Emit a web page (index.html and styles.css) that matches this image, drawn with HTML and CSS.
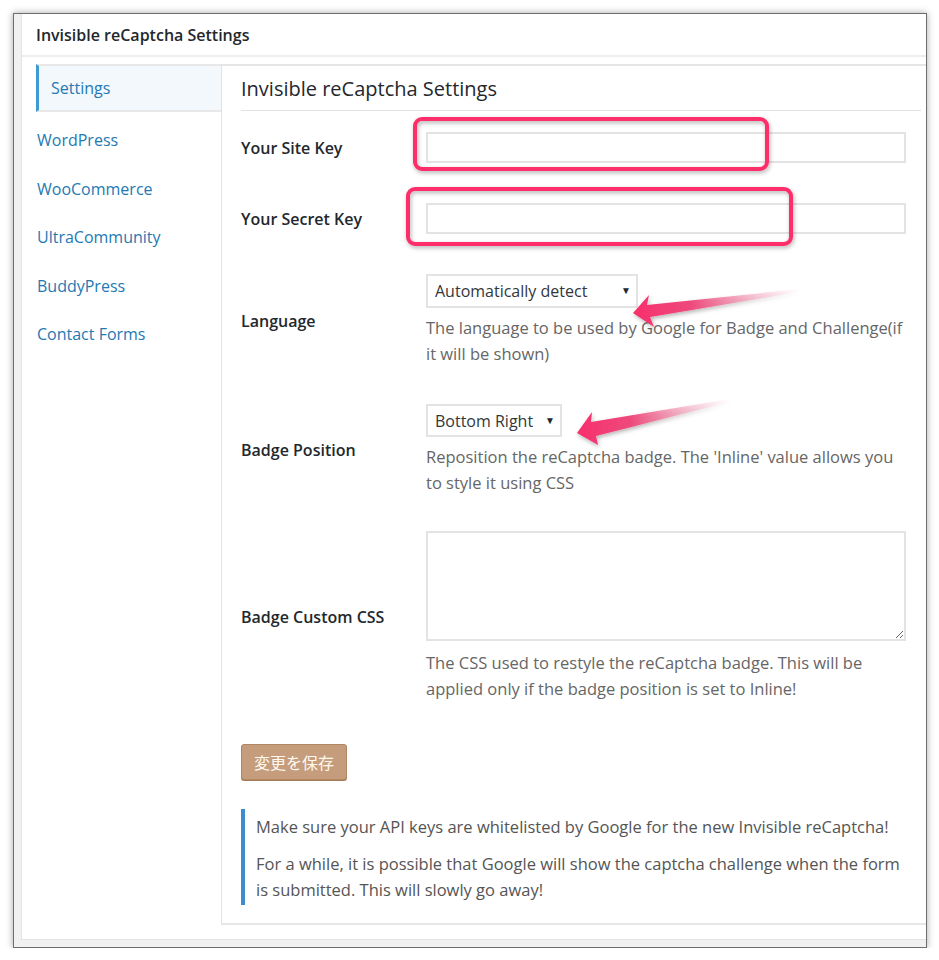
FILE: index.html
```html
<!DOCTYPE html>
<html lang="en">
<head>
    <meta charset="UTF-8">
    <meta name="viewport" content="width=device-width, initial-scale=1.0">
    <title>Invisible reCaptcha Settings</title>
    <link rel="stylesheet" href="styles.css">
</head>
<body>
    <div class="window">
        <div class="panel">
            <div class="heading">
                <h1>Invisible reCaptcha Settings</h1>
            </div>
            <div class="layout">
                <ul class="side-nav">
                    <li class="active"><a href="#">Settings</a></li>
                    <li><a href="#">WordPress</a></li>
                    <li><a href="#">WooCommerce</a></li>
                    <li><a href="#">UltraCommunity</a></li>
                    <li><a href="#">BuddyPress</a></li>
                    <li><a href="#">Contact Forms</a></li>
                </ul>

                <div class="main">
                    <h2>Invisible reCaptcha Settings</h2>
                    <form class="form-table">
                        <div class="row row-first">
                            <label>Your Site Key</label>
                            <div class="field"><input type="text" class="regular-text"></div>
                        </div>
                        <div class="row">
                            <label>Your Secret Key</label>
                            <div class="field"><input type="text" class="regular-text"></div>
                        </div>
                        <div class="row has-desc">
                            <label>Language</label>
                            <div class="field">
                                <span class="select-wrap lang">
                                    <select><option>Automatically detect</option></select>
                                </span>
                                <p class="description">The language to be used by Google for Badge and Challenge(if it will be shown)</p>
                            </div>
                        </div>
                        <div class="row has-desc">
                            <label>Badge Position</label>
                            <div class="field">
                                <span class="select-wrap badge">
                                    <select><option>Bottom Right</option></select>
                                </span>
                                <p class="description">Reposition the reCaptcha badge. The 'Inline' value allows you to style it using CSS</p>
                            </div>
                        </div>
                        <div class="row has-desc row-css">
                            <label>Badge Custom CSS</label>
                            <div class="field">
                                <textarea></textarea>
                                <p class="description after-area">The CSS used to restyle the reCaptcha badge. This will be applied only if the badge position is set to Inline!</p>
                            </div>
                        </div>
                        <button type="button" class="button-primary">変更を保存</button>
                    </form>

                    <div class="notice">
                        <p>Make sure your API keys are whitelisted by Google for the new Invisible reCaptcha!</p>
                        <p>For a while, it is possible that Google will show the captcha challenge when the form is submitted. This will slowly go away!</p>
                    </div>
                </div>
            </div>
        </div>
    </div>

    <!-- screenshot annotations -->
    <svg class="annotations" width="939" height="960" viewBox="0 0 939 960">
        <defs>
            <filter id="shade" x="-10%" y="-20%" width="120%" height="150%">
                <feDropShadow dx="1" dy="2" stdDeviation="2" flood-color="#000" flood-opacity="0.3"/>
            </filter>
            <linearGradient id="fade1" x1="633" y1="0" x2="800" y2="0" gradientUnits="userSpaceOnUse">
                <stop offset="0" stop-color="#f72f6c"/>
                <stop offset="0.35" stop-color="#ee4a7c"/>
                <stop offset="1" stop-color="#f6a9c2" stop-opacity="0"/>
            </linearGradient>
            <linearGradient id="fade2" x1="577" y1="0" x2="730" y2="0" gradientUnits="userSpaceOnUse">
                <stop offset="0" stop-color="#f72f6c"/>
                <stop offset="0.35" stop-color="#ee4a7c"/>
                <stop offset="1" stop-color="#f6a9c2" stop-opacity="0"/>
            </linearGradient>
        </defs>
        <g fill="none" stroke="#fd2e6a" stroke-width="4" filter="url(#shade)">
            <rect x="415" y="119" width="352" height="50" rx="7"/>
            <rect x="408" y="189" width="383" height="55" rx="7"/>
        </g>
        <g filter="url(#shade)">
            <polygon fill="url(#fade1)" points="633,313 649,295 647,305 800,289 800,292 650,317 654,327"/>
            <polygon fill="url(#fade2)" points="577,433 592,412 591,422 730,399 730,402 596,436 598,445"/>
        </g>
    </svg>
</body>
</html>
```

FILE: styles.css
```css
body {
    margin: 0;
    background: #fff;
    font-family: "Open Sans", "Noto Sans", sans-serif;
    color: #23282d;
}

/* Window frame around the admin page */
.window {
    margin: 13px 0 0 13px;
    width: 905px;
    height: 926px;
    border: 1px solid #6e6e6e;
    background: #f1f1f1;
    padding: 0 0 7px 7px;
    box-sizing: content-box;
    box-shadow: 0 0 7px rgba(0, 0, 0, 0.35);
    display: flex;
    flex-direction: column;
}
.window .panel {
    flex: 1;
    background: #fff;
    border-left: 1px solid #e3e3e3;
    border-bottom: 1px solid #e3e3e3;
    display: flex;
    flex-direction: column;
}

.heading {
    height: 41px;
    display: flex;
    align-items: center;
    padding-left: 14px;
    border-bottom: 2px solid #eee;
}
.heading h1 {
    margin: 0;
    font-size: 16px;
    font-weight: 600;
    color: #23282d;
}

.layout {
    display: flex;
    margin-top: 7px;
    padding-left: 14px;
}

/* Left tabs */
.side-nav {
    list-style: none;
    margin: 0;
    padding: 0;
    width: 185px;
    flex-shrink: 0;
}
.side-nav li {
    height: 48.5px;
    display: flex;
    align-items: center;
}
.side-nav li a {
    color: #2479b3;
    text-decoration: none;
    font-size: 16px;
    padding-left: 1px;
}
.side-nav li.active {
    height: 44px;
    margin-bottom: 4px;
    background: #f2f8fc;
    border-top: 2px solid #e8e8e8;
    border-bottom: 2px solid #e8e8e8;
    border-left: 3px solid #3e9ad3;
}
.side-nav li.active a {
    padding-left: 12px;
}

/* Main settings area */
.main {
    flex: 1;
    height: 857px;
    border-top: 2px solid #e6e6e6;
    border-left: 1px solid #e3e3e3;
    border-bottom: 2px solid #e6e6e6;
    padding: 0 5px 0 19px;
}
.main h2 {
    margin: 0;
    padding: 9px 0 7px;
    line-height: 28px;
    font-size: 20px;
    font-weight: 400;
    color: #23282d;
    border-bottom: 1px solid #e3e3e3;
}

.form-table .row {
    display: grid;
    grid-template-columns: 185px 480px;
    align-items: center;
    padding: 20px 0;
}
.form-table .row-first {
    padding-top: 21px;
}
.form-table .row.has-desc {
    padding-bottom: 17px;
}
.form-table .row.row-css {
    padding-top: 18px;
}
.form-table label {
    font-weight: 600;
    font-size: 16px;
    color: #23282d;
}
.form-table input.regular-text {
    display: block;
    width: 480px;
    height: 31px;
    box-sizing: border-box;
    border: 2px solid #e3e3e3;
    background: #fff;
}
.select-wrap {
    position: relative;
    display: inline-block;
}
.select-wrap select {
    appearance: none;
    font-family: "Open Sans", "Noto Sans", sans-serif;
    font-size: 16px;
    color: #32373c;
    background: #fff;
    border: 2px solid #e3e3e3;
    padding: 0 0 0 7px;
    height: 34px;
    display: block;
}
.select-wrap::after {
    content: "▼";
    position: absolute;
    right: 7px;
    top: 9px;
    font-size: 10px;
    color: #23282d;
    pointer-events: none;
}
.select-wrap.lang select {
    width: 212px;
}
.select-wrap.badge select {
    width: 136px;
    height: 33px;
}
.form-table textarea {
    display: block;
    width: 480px;
    height: 110px;
    box-sizing: border-box;
    border: 2px solid #e3e3e3;
}
.description {
    margin: 7px 0 0;
    font-size: 16.5px;
    line-height: 26px;
    color: #666;
}
.description.after-area {
    margin-top: 9px;
}

.button-primary {
    margin-top: 25px;
    width: 106px;
    height: 36px;
    background: #c59d7c;
    border: 1px solid #b08763;
    border-radius: 3px;
    box-shadow: 0 1px 0 #a87c58;
    color: #fff8f0;
    font-family: "Noto Sans CJK JP", sans-serif;
    font-size: 16px;
    cursor: pointer;
}

/* Info notice under the form */
.notice {
    margin-top: 29px;
    border-left: 4px solid #3b8cd0;
    padding: 5px 8px 2px 11px;
    font-size: 16.5px;
    line-height: 26px;
    color: #555;
}
.notice p {
    margin: 0;
}
.notice p + p {
    margin-top: 11px;
}

/* Pink marks drawn over the screenshot */
.annotations {
    position: absolute;
    top: 0;
    left: 0;
    pointer-events: none;
}
```
